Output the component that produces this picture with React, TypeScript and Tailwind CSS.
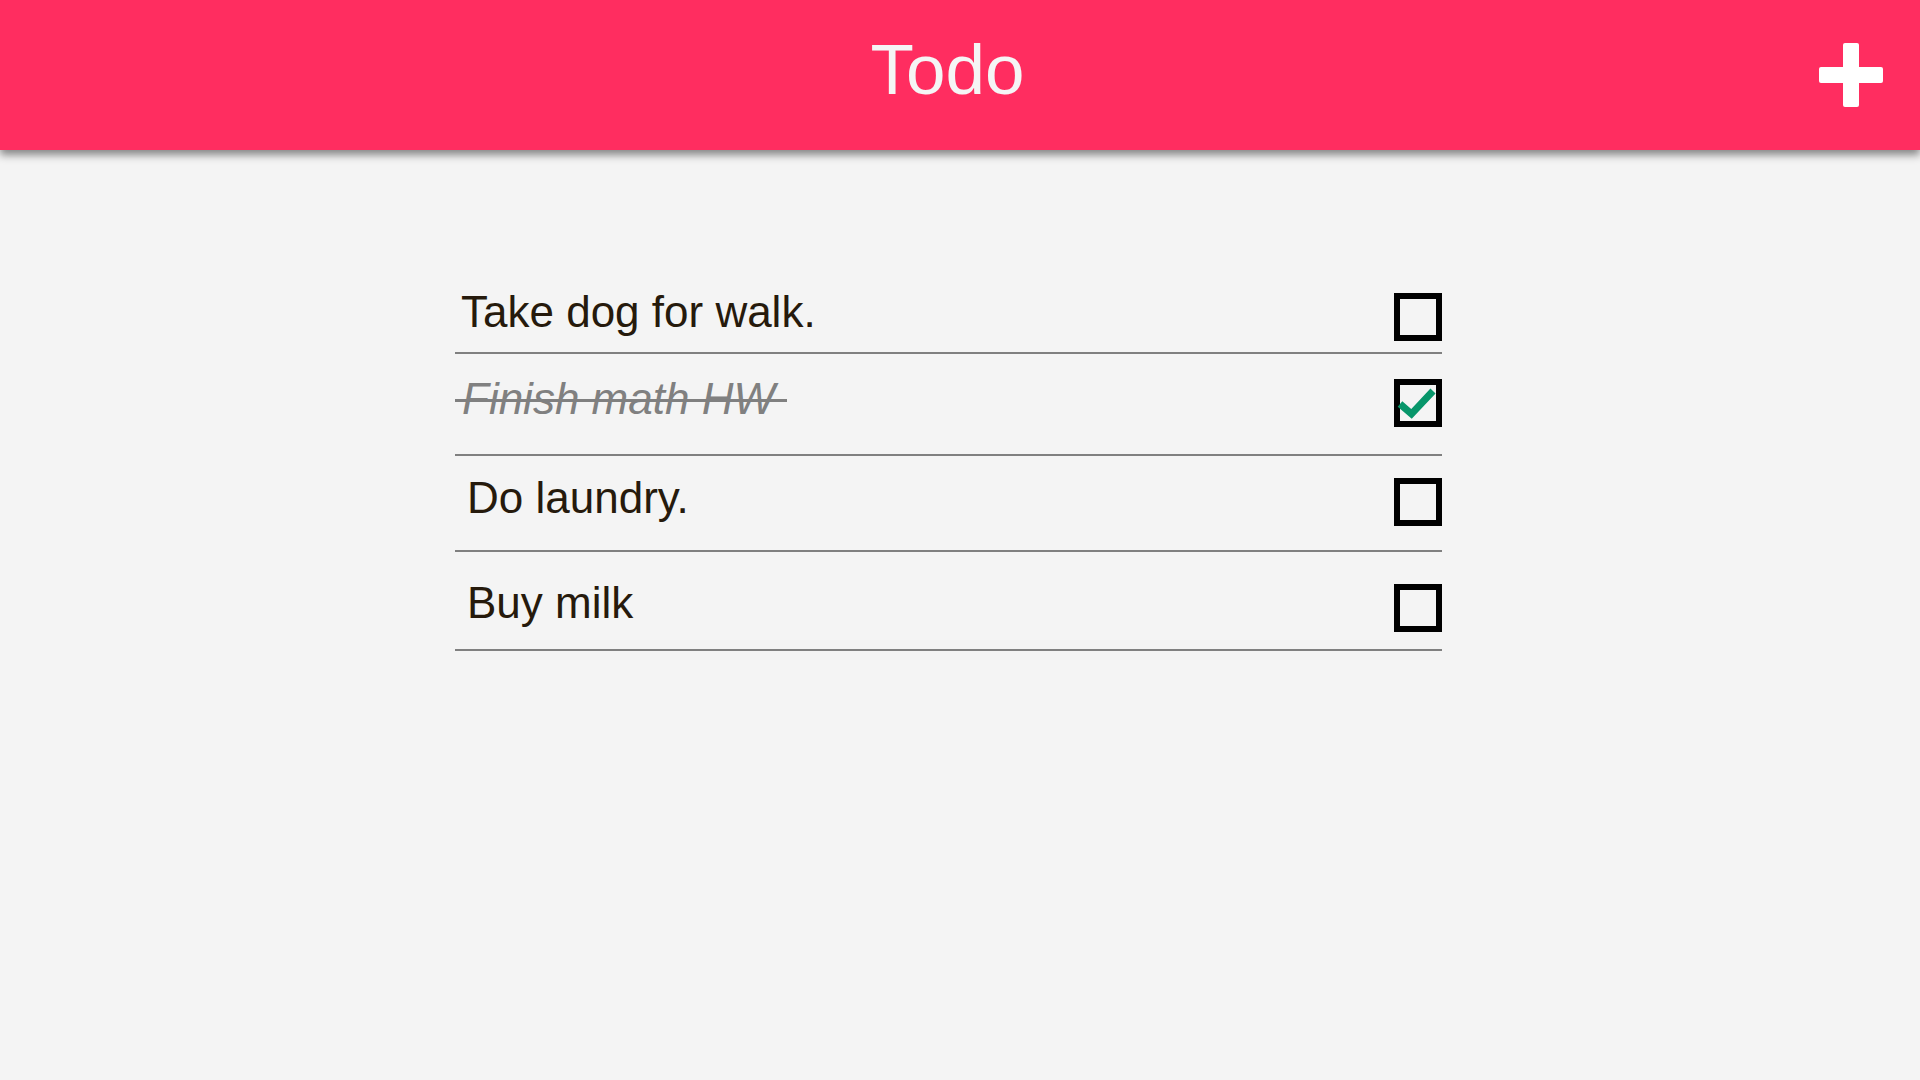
const todos = [
  { text: "Take dog for walk.", done: false, row: "h-[74px]", textMt: "mt-[10px]", boxMt: "mt-[13px]", ml: "ml-[6px]" },
  { text: "Finish math HW", done: true, row: "h-[102px]", textMt: "mt-[23px]", boxMt: "mt-[25px]", ml: "ml-[7px]" },
  { text: "Do laundry.", done: false, row: "h-[96px]", textMt: "mt-[20px]", boxMt: "mt-[22px]", ml: "ml-[12px]" },
  { text: "Buy milk", done: false, row: "h-[99px]", textMt: "mt-[29px]", boxMt: "mt-[32px]", ml: "ml-[12px]" },
];

function PlusIcon() {
  return (
    <svg width="64" height="64" viewBox="0 0 64 64" fill="#ffffff">
      <rect x="24" y="0" width="16" height="64" rx="2" />
      <rect x="0" y="24" width="64" height="16" rx="2" />
    </svg>
  );
}

function Checkbox({ checked }: { checked: boolean }) {
  return (
    <div className="relative w-[48px] h-[48px] border-[6px] border-black">
      {checked && (
        <svg
          className="absolute -left-[6px] -top-[6px]"
          width="48"
          height="48"
          viewBox="0 0 48 48"
          fill="none"
        >
          <path
            d="M6 25 L17.5 35 L39 12"
            stroke="#07966a"
            strokeWidth="7"
            strokeLinejoin="miter"
          />
        </svg>
      )}
    </div>
  );
}

export default function App() {
  return (
    <div
      className="min-h-screen bg-[#f4f4f4]"
      style={{ fontFamily: '"Liberation Sans", Arial, sans-serif' }}
    >
      <header className="h-[150px] bg-[#ff2d60] flex items-center pl-[12px] pr-[37px] shadow-[0_5px_8px_rgba(0,0,0,0.45)]">
        <div className="flex-1" />
        <h1 className="text-[71px] leading-[71px] text-[#f5f5f5] mb-[11px]">Todo</h1>
        <div className="flex-1 flex justify-end">
          <PlusIcon />
        </div>
      </header>

      <ul className="ml-[455px] w-[987px] pt-[130px]">
        {todos.map((t) => (
          <li
            key={t.text}
            className={`flex justify-between items-start border-b-2 border-[#808080] ${t.row}`}
          >
            {t.done ? (
              <span className={`relative text-[44px] leading-[44px] italic text-[#808080] ${t.textMt} ${t.ml}`}>
                {t.text}
                <span className="absolute -left-[7px] top-[22px] w-[332px] h-[3px] bg-[#808080]" />
              </span>
            ) : (
              <span className={`text-[44px] leading-[44px] text-[#261a0c] ${t.textMt} ${t.ml}`}>
                {t.text}
              </span>
            )}
            <div className={t.boxMt}>
              <Checkbox checked={t.done} />
            </div>
          </li>
        ))}
      </ul>
    </div>
  );
}
